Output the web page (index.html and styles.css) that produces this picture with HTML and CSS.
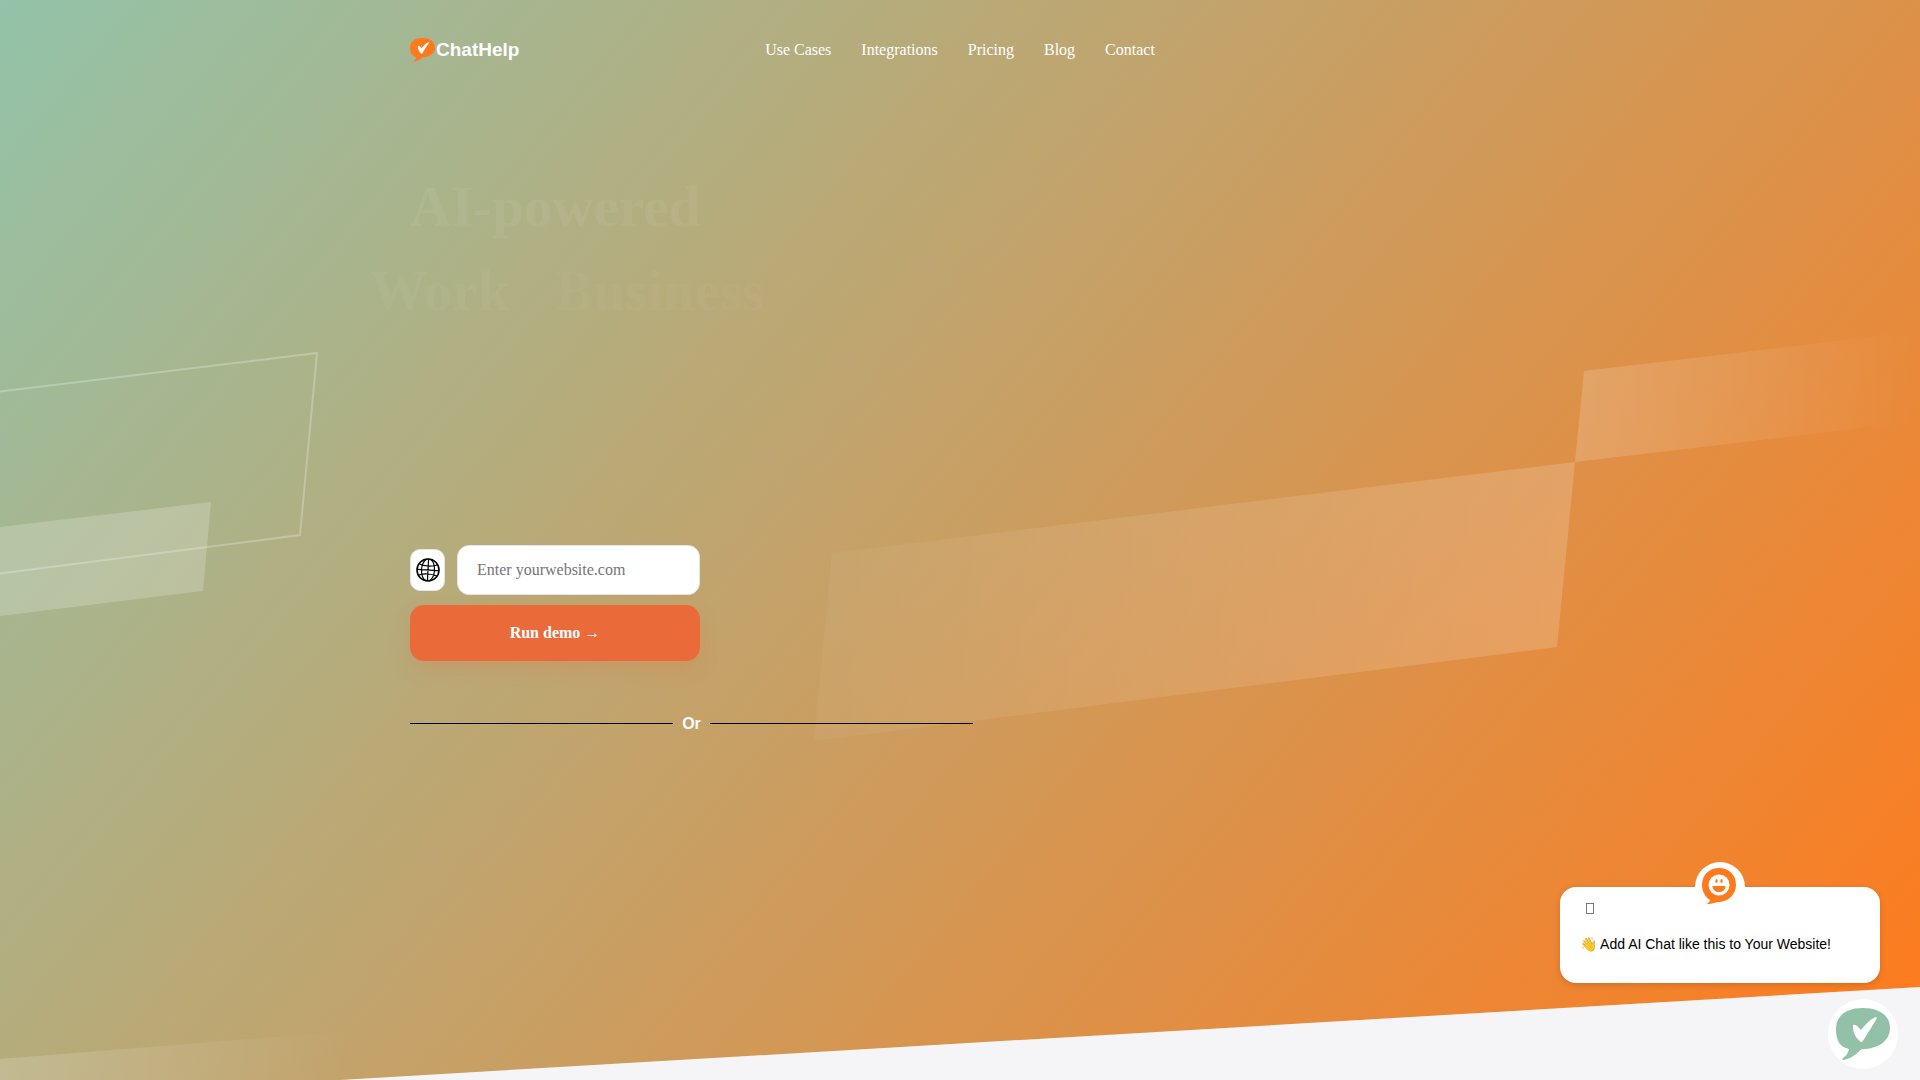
FILE: index.html
```html
<!DOCTYPE html>
<html lang="en">
<head>
    <meta charset="UTF-8">
    <meta name="viewport" content="width=device-width, initial-scale=1.0">
    <title>ChatHelp</title>
    <link rel="stylesheet" href="styles.css">
</head>
<body>
    <div class="page">
        <div class="hero">
            <svg class="hero-shapes" viewBox="0 0 1920 1100" preserveAspectRatio="none" aria-hidden="true">
                <defs>
                    <linearGradient id="fade-left">
                        <stop offset="0" stop-color="#fff" stop-opacity="0.04"/>
                        <stop offset="1" stop-color="#fff" stop-opacity="0.17"/>
                    </linearGradient>
                    <linearGradient id="fade-right">
                        <stop offset="0" stop-color="#fff" stop-opacity="0.17"/>
                        <stop offset="1" stop-color="#fff" stop-opacity="0"/>
                    </linearGradient>
                </defs>
                <polygon points="-20,394 317,353 300,535 -20,576" fill="none" stroke="#fff" stroke-opacity="0.25" stroke-width="2"/>
                <polygon points="0,527 211,502 203,591 0,616" fill="#fff" fill-opacity="0.2"/>
                <polygon points="832,553 1575,462 1557,647 814,741" fill="url(#fade-left)"/>
                <polygon points="1584,371 1920,331 1920,421 1575,462" fill="url(#fade-right)"/>
                <polygon points="0,1059 350,1031 350,1100 0,1100" fill="url(#fade-right)"/>
            </svg>

            <header class="header container">
                <a href="#" class="logo">
                    <svg class="logo-icon" viewBox="0 0 54 52" aria-hidden="true">
                        <path fill="#ff7a1c" d="M27 0C41 0 54 6 54 20c0 13-10 21-27 22C21 46 15 51 7 52c4-4 6-7 6-11C4 39 0 31 0 21 0 7 11 0 27 0z"/>
                        <path fill="#fff" d="M17 17c3-1 5 2 8 5 4-5 9-11 15-13l2 1C35 18 31 27 26 34c-3 1-10-8-9-17z"/>
                    </svg>
                    <span>ChatHelp</span>
                </a>
                <nav class="nav">
                    <a href="#">Use Cases</a>
                    <a href="#">Integrations</a>
                    <a href="#">Pricing</a>
                    <a href="#">Blog</a>
                    <a href="#">Contact</a>
                </nav>
            </header>

            <main class="container">
                <div class="intro">
                    <h1>
                        <span class="line">AI-powered</span>
                        <span class="line line-shifted"><span>Work</span><span class="faint">Business</span></span>
                    </h1>

                    <form class="demo-form">
                        <div class="demo-row">
                            <label class="globe" for="website" aria-label="Website">
                                <svg viewBox="0 0 24 24" fill="none" stroke="#000" aria-hidden="true">
                                    <circle cx="12" cy="12" r="11" stroke-width="1.6"/>
                                    <path stroke-width="1.2" transform="rotate(3 12 12)" d="M12 1v22M1 12h22M3 6.500c5 2 13 2 18 0M3 17.500c5-2 13-2 18 0M10 1C4 6 4 18 10 23M14 1c6 5 6 17 0 22"/>
                                </svg>
                            </label>
                            <input type="text" id="website" placeholder="Enter yourwebsite.com">
                        </div>
                        <button type="submit" class="btn">Run demo <span class="arrow">→</span></button>
                    </form>

                    <div class="divider">Or</div>
                </div>
            </main>
        </div>

        <aside class="chat-popup">
            <div class="chat-avatar">
                <svg viewBox="0 0 34 36" aria-hidden="true">
                    <path fill="#ff7a1c" d="M17 0c10 0 17 7 17 17 0 9-7 16-16 17-5 0-7 2-13 2 2-2 3-3 3-4C3 29 0 23 0 17 0 7 7 0 17 0z"/>
                    <circle cx="17" cy="17" r="10.500" fill="#fff"/>
                    <ellipse cx="14.500" cy="13" rx="1.200" ry="2" fill="#ff7a1c"/>
                    <ellipse cx="19.500" cy="13" rx="1.200" ry="2" fill="#ff7a1c"/>
                    <path fill="#ff7a1c" d="M10.500 18h13c0 8-13 8-13 0z"/>
                </svg>
            </div>
            <button type="button" class="chat-close" aria-label="Close"></button>
            <p>👋 Add AI Chat like this to Your Website!</p>
        </aside>

        <button type="button" class="chat-launcher" aria-label="Open chat">
            <svg viewBox="0 0 54 52" aria-hidden="true">
                <path fill="#93c1a7" d="M27 0C41 0 54 6 54 20c0 13-12 21-28 21C20 46 15 51 7 52c-1-1-1-1 0-2 4-3 5-5 6-9C4 39 0 33 0 21 0 7 11 0 27 0z"/>
                <path fill="#fff" d="M17 17c3-1 5 2 8 5 4-5 9-11 15-13l1 1C36 18 31 27 26 34c-3 0-10-8-9-17z"/>
            </svg>
        </button>
    </div>
</body>
</html>
```
FILE: styles.css
```css
* {
    margin: 0;
    padding: 0;
    box-sizing: border-box;
}

body {
    background: #f5f5f7;
    font-family: 'Liberation Serif', 'Times New Roman', serif;
    font-size: 16px;
    color: #fff;
}

.page {
    position: relative;
    height: 100vh;
    overflow: hidden;
}

.hero {
    position: relative;
    min-height: calc(100vh + 20px);
    background: linear-gradient(130deg, #93c3a9 0%, #ff7a1c 99%);
    clip-path: polygon(0 0, 100% 0, 100% calc(100% - 113px), 0 100%);
}

.hero-shapes {
    position: absolute;
    top: 0;
    left: 0;
    width: 100%;
    height: 100%;
}

.container {
    position: relative;
    width: 100%;
    max-width: 1100px;
    margin: 0 auto;
}

.header {
    display: grid;
    grid-template-columns: 1fr auto 1fr;
    align-items: center;
    height: 100px;
}

.logo {
    display: flex;
    align-items: center;
    gap: 1px;
    color: #fff;
    text-decoration: none;
    font-family: 'Liberation Sans', Arial, sans-serif;
    font-size: 19px;
    font-weight: bold;
}

.logo-icon {
    width: 25px;
    height: 24px;
}

.nav {
    display: flex;
    gap: 30px;
}

.nav a {
    color: #fff;
    text-decoration: none;
}

.intro {
    max-width: 563px;
    padding-top: 65px;
}

h1 {
    font-size: 57px;
    line-height: 84px;
    height: 380px;
}

.line {
    display: block;
    color: rgba(255, 255, 255, 0.06);
}

.line-shifted {
    display: flex;
    gap: 46px;
    margin-left: -40px;
    color: rgba(255, 255, 255, 0.04);
}

.faint {
    color: rgba(255, 255, 255, 0.03);
}

.demo-form {
    width: 290px;
}

.demo-row {
    display: flex;
    align-items: center;
    gap: 12px;
    margin-bottom: 10px;
}

.globe {
    display: flex;
    align-items: center;
    justify-content: center;
    width: 35px;
    height: 42px;
    background: #fff;
    border: 1px solid #e4e4e8;
    border-radius: 10px;
}

.globe svg {
    width: 24px;
    height: 24px;
    flex-shrink: 0;
}

.demo-row input {
    flex: 1;
    min-width: 0;
    height: 50px;
    padding: 0 19px;
    background: #fff;
    border: 1px solid #e4e4e8;
    border-radius: 12px;
    font-family: inherit;
    font-size: 16px;
}

.demo-row input::placeholder {
    color: #757575;
}

.btn {
    width: 100%;
    height: 56px;
    background: #eb6a3a;
    border: none;
    border-radius: 14px;
    box-shadow: 0 8px 20px rgba(235, 106, 58, 0.2);
    color: #fff;
    font-family: inherit;
    font-size: 16px;
    font-weight: bold;
    cursor: pointer;
}

.arrow {
    font-weight: normal;
}

.divider {
    display: flex;
    align-items: center;
    gap: 9px;
    margin-top: 52px;
    font-family: 'Liberation Sans', Arial, sans-serif;
    font-size: 16px;
    line-height: 21px;
    font-weight: bold;
}

.divider::before,
.divider::after {
    content: '';
    flex: 1;
    height: 1px;
    background: #000;
}

.chat-popup {
    position: absolute;
    right: 40px;
    bottom: 97px;
    width: 320px;
    height: 96px;
    padding: 16px 20px;
    background: #fff;
    border-radius: 16px;
    box-shadow: 0 2px 6px rgba(0, 0, 0, 0.15);
    color: #000;
    font-family: 'Liberation Sans', Arial, sans-serif;
    font-size: 14px;
    line-height: 20px;
}

.chat-avatar {
    position: absolute;
    top: -25px;
    left: 50%;
    display: flex;
    align-items: center;
    justify-content: center;
    width: 50px;
    height: 50px;
    margin-left: -25px;
    padding: 0 2px 2px 0;
    background: #fff;
    border-radius: 50%;
}

.chat-avatar svg {
    width: 34px;
    height: 36px;
}

.chat-close {
    display: block;
    width: 8px;
    height: 11px;
    margin: 0 0 20px 6px;
    background: none;
    border: 1px solid #777;
    cursor: pointer;
}

.chat-launcher {
    position: absolute;
    right: 22px;
    bottom: 11px;
    display: flex;
    align-items: center;
    justify-content: center;
    width: 70px;
    height: 70px;
    background: #fff;
    border: none;
    border-radius: 50%;
    cursor: pointer;
}

.chat-launcher svg {
    width: 54px;
    height: 52px;
}
```
